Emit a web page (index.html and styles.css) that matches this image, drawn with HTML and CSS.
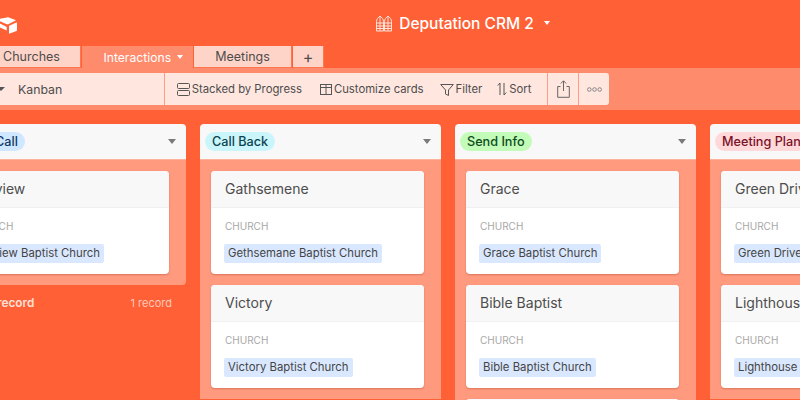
FILE: index.html
```html
<!DOCTYPE html>
<html lang="en">
<head>
<meta charset="utf-8">
<title>Deputation CRM 2</title>
<link rel="stylesheet" href="styles.css">
</head>
<body>
<div class="app">
  <header class="topbar">
    <svg class="logo" width="18" height="17" viewBox="0 0 18 17"><path d="M7 .4c.6-.2 1.200-.2 1.800 0l6.700 2.500c.5.200.5.500 0 .7L8.300 7.200c-.5.200-1 .2-1.500 0L0 4.200V1.800z" fill="#fff"/><path d="M9.300 8.800 16.300 5.600c.4-.2.700 0 .7.400v7.300c0 .4-.2.600-.5.800l-6.800 2.500c-.4.100-.7-.1-.7-.5V9.500c0-.3.100-.6.300-.7z" fill="#fff"/><path d="M0 6.500 6.300 9.800c.3.100.4.300.4.600v3.200L0 10.500z" fill="#fff"/></svg>
    <div class="title">
      <svg class="title-icon" width="16" height="17" viewBox="0 0 16 17" fill="none" stroke="#ffe3da" stroke-width="1"><path d="M.5 16V6.500C.5 4 2.300 2.500 4 1 5.700 2.500 7.500 4 7.500 6.500V16zM8.500 16V6.500C8.500 4 10.300 2.500 12 1 13.700 2.500 15.500 4 15.500 6.500V16z"/><path d="M.5 8h15M.5 11h15M.5 13.500h15M4 1v15M12 1v15"/></svg>
      <span>Deputation CRM 2</span>
      <i class="caret caret-white"></i>
    </div>
  </header>
  <nav class="tabs">
    <div class="tab tab-churches">Churches</div>
    <div class="tab tab-active">Interactions <i class="caret caret-white caret-small"></i></div>
    <div class="tab tab-meetings">Meetings</div>
    <div class="tab tab-add">+</div>
  </nav>
  <div class="toolband">
    <div class="toolbar">
      <div class="tool-view"><i class="caret caret-dark"></i><span>Kanban</span></div>
      <div class="tool-main">
        <span class="tool"><svg width="13" height="13" viewBox="0 0 13 13" fill="none" stroke="#555"><rect x=".5" y=".5" width="12" height="5" rx="1"/><rect x=".5" y="7.500" width="12" height="5" rx="1"/></svg>Stacked by Progress</span>
        <span class="tool tool-customize"><svg width="12" height="13" viewBox="0 0 12 13" fill="none" stroke="#555"><rect x=".5" y="1.500" width="11" height="10"/><path d="M.5 4.500h11M6 1.500v10"/></svg>Customize cards</span>
        <span class="tool tool-filter"><svg width="14" height="13" viewBox="0 0 14 13" fill="none" stroke="#555"><path d="M.7 1.500h12.600L8.500 7v5.500L5.500 11V7z"/></svg>Filter</span>
        <span class="tool tool-sort"><svg width="10" height="14" viewBox="0 0 10 14" fill="none" stroke="#555"><path d="M3 13V1L.8 3.500M7 1v12l2.200-2.500"/></svg>Sort</span>
      </div>
      <div class="tool-icon tool-share"><svg width="13" height="18" viewBox="0 0 13 18" fill="none" stroke="#666"><path d="M3.500 6.500H.7v10.800h11.600V6.500H9.500M6.500 11V1M3.800 3.500 6.500.8l2.700 2.700"/></svg></div>
      <div class="tool-icon"><svg width="15" height="5" viewBox="0 0 15 5" fill="none" stroke="#888"><circle cx="2.300" cy="2.500" r="1.800"/><circle cx="7.500" cy="2.500" r="1.800"/><circle cx="12.700" cy="2.500" r="1.800"/></svg></div>
    </div>
  </div>
  <main class="board">
    <section class="column">
      <div class="col-head"><span class="pill pill-blue">Call</span><i class="caret caret-grey"></i></div>
      <div class="col-body col-body-short">
        <article class="card"><h3 class="card-title">Fairview</h3><div class="card-body"><div class="label">CHURCH</div><span class="chip">Fairview Baptist Church</span></div></article>
      </div>
      <div class="col-foot"><strong>+ Add record</strong><span>1 record</span></div>
    </section>
    <section class="column">
      <div class="col-head"><span class="pill pill-cyan">Call Back</span><i class="caret caret-grey"></i></div>
      <div class="col-body">
        <article class="card"><h3 class="card-title">Gathsemene</h3><div class="card-body"><div class="label">CHURCH</div><span class="chip">Gethsemane Baptist Church</span></div></article>
        <article class="card"><h3 class="card-title">Victory</h3><div class="card-body"><div class="label">CHURCH</div><span class="chip">Victory Baptist Church</span></div></article>
      </div>
    </section>
    <section class="column">
      <div class="col-head"><span class="pill pill-green">Send Info</span><i class="caret caret-grey"></i></div>
      <div class="col-body">
        <article class="card"><h3 class="card-title">Grace</h3><div class="card-body"><div class="label">CHURCH</div><span class="chip">Grace Baptist Church</span></div></article>
        <article class="card"><h3 class="card-title">Bible Baptist</h3><div class="card-body"><div class="label">CHURCH</div><span class="chip">Bible Baptist Church</span></div></article>
        <article class="card"><h3 class="card-title">First Baptist</h3><div class="card-body"><div class="label">CHURCH</div><span class="chip">First Baptist Church</span></div></article>
      </div>
    </section>
    <section class="column">
      <div class="col-head"><span class="pill pill-red">Meeting Planned</span><i class="caret caret-grey"></i></div>
      <div class="col-body">
        <article class="card"><h3 class="card-title">Green Drive</h3><div class="card-body"><div class="label">CHURCH</div><span class="chip">Green Drive Baptist Church</span></div></article>
        <article class="card"><h3 class="card-title">Lighthouse</h3><div class="card-body"><div class="label">CHURCH</div><span class="chip">Lighthouse Baptist Church</span></div></article>
      </div>
    </section>
  </main>
</div>
</body>
</html>
```
FILE: styles.css
```css
* { box-sizing: border-box; }
html, body { margin: 0; height: 100%; overflow: hidden; }
body { background: #ff6035; font-family: Inter, "Liberation Sans", sans-serif; color: #4d4d4d; }
.app { width: 926px; height: 400px; overflow: hidden; }

.caret { display: inline-block; width: 0; height: 0; border-left: 4px solid transparent; border-right: 4px solid transparent; border-top: 5px solid #777; }
.caret-white { border-top-color: #fff; border-left-width: 3px; border-right-width: 3px; border-top-width: 4px; }
.caret-small { margin-left: 2px; vertical-align: 2px; }
.caret-dark { border-top-color: #555; border-top-width: 4px; }
.caret-grey { border-top-color: #7a7a7a; }

.topbar { height: 46px; display: flex; align-items: center; justify-content: center; position: relative; }
.logo { position: absolute; left: 0; top: 17px; }
.title { display: flex; align-items: center; gap: 7px; color: #fff; font-size: 15.500px; font-weight: 500; }
.title .caret { margin-left: 3px; }

.tabs { height: 22px; display: flex; gap: 1px; margin-left: -30px; font-size: 12.500px; }
.tab { height: 22px; background: #ffd4c8; border-bottom: 1px solid #ff7650; border-right: 1px solid #ff7650; display: flex; align-items: center; justify-content: center; color: #4d4d4d; }
.tab-churches { width: 111px; padding-left: 13px; white-space: nowrap; }
.tab-active { width: 111px; background: #ff8b6d; color: #fff; border: 0; white-space: pre; padding-left: 11px; font-size: 12.200px; }
.tab-meetings { width: 98px; }
.tab-add { width: 31px; font-size: 16px; }

.toolband { height: 42px; background: #ff8b6d; padding-top: 5px; }
.toolbar { width: 664px; height: 32px; margin-left: -55px; background: #ffe6df; border-radius: 3px; display: flex; align-items: stretch; font-size: 11.300px; color: #4d4d4d; }
.tool-view { width: 220px; border-right: 1px solid #ff9e85; display: flex; align-items: center; gap: 13px; padding-left: 52px; font-size: 12.300px; }
.tool-main { width: 384px; display: flex; align-items: center; padding-left: 12px; border-right: 1px solid #ff9e85; }
.tool { display: flex; align-items: center; gap: 2px; white-space: nowrap; }
.tool-customize { margin-left: 18px; }
.tool-filter { margin-left: 16px; }
.tool-sort { margin-left: 15px; }
.tool-icon { width: 30px; display: flex; align-items: center; justify-content: center; }
.tool-share { border-right: 1px solid #ff9e85; width: 31px; }

.board { display: flex; gap: 14px; margin-left: -55px; padding-top: 14px; align-items: flex-start; }
.column { width: 241px; flex: none; }
.col-head { height: 36px; background: #f8f8f8; border-radius: 4px 4px 0 0; border-bottom: 1px solid #ffb29c; display: flex; align-items: center; justify-content: space-between; padding: 0 10px 0 5px; }
.pill { height: 19px; border-radius: 10px; padding: 0 7px; display: flex; align-items: center; font-size: 12.650px; font-weight: 500; }
.pill-blue { background: #cfe7ff; color: #103a66; padding-left: 45px; }
.pill-cyan { background: #c9f5fb; color: #0d4450; }
.pill-green { background: #c3fbb9; color: #0f4d1c; }
.pill-red { background: #ffd8da; color: #7a1228; }
.col-body { background: #ff9a7f; padding: 11px 17px 11px 11px; display: flex; flex-direction: column; gap: 11px; }
.col-body-short { border-radius: 0 0 4px 4px; }
.col-foot { display: flex; justify-content: space-between; padding: 11px 14px 0 15px; font-size: 11px; color: #ffc9b9; }
.col-foot strong { color: #ffe1d8; font-weight: 600; font-size: 11.800px; }

.card { background: #fff; border-radius: 4px; box-shadow: 0 1px 2px rgba(150, 50, 20, .35); overflow: hidden; height: 103px; }
.card-title { margin: 0; height: 37px; background: #f8f8f8; border-bottom: 1px solid #f0f0f0; font-size: 14px; font-weight: 400; color: #4d4d4d; display: flex; align-items: center; padding: 0 0 1px 14px; }
.card-body { padding: 12px 13px; }
.label { font-size: 10px; color: #a8a8a8; line-height: 12px; margin: 0 0 9px 1px; }
.chip { display: inline-block; background: #dae8ff; border-radius: 2px; font-size: 11.350px; line-height: 19px; padding: 0 4px; color: #444; white-space: nowrap; }
```
